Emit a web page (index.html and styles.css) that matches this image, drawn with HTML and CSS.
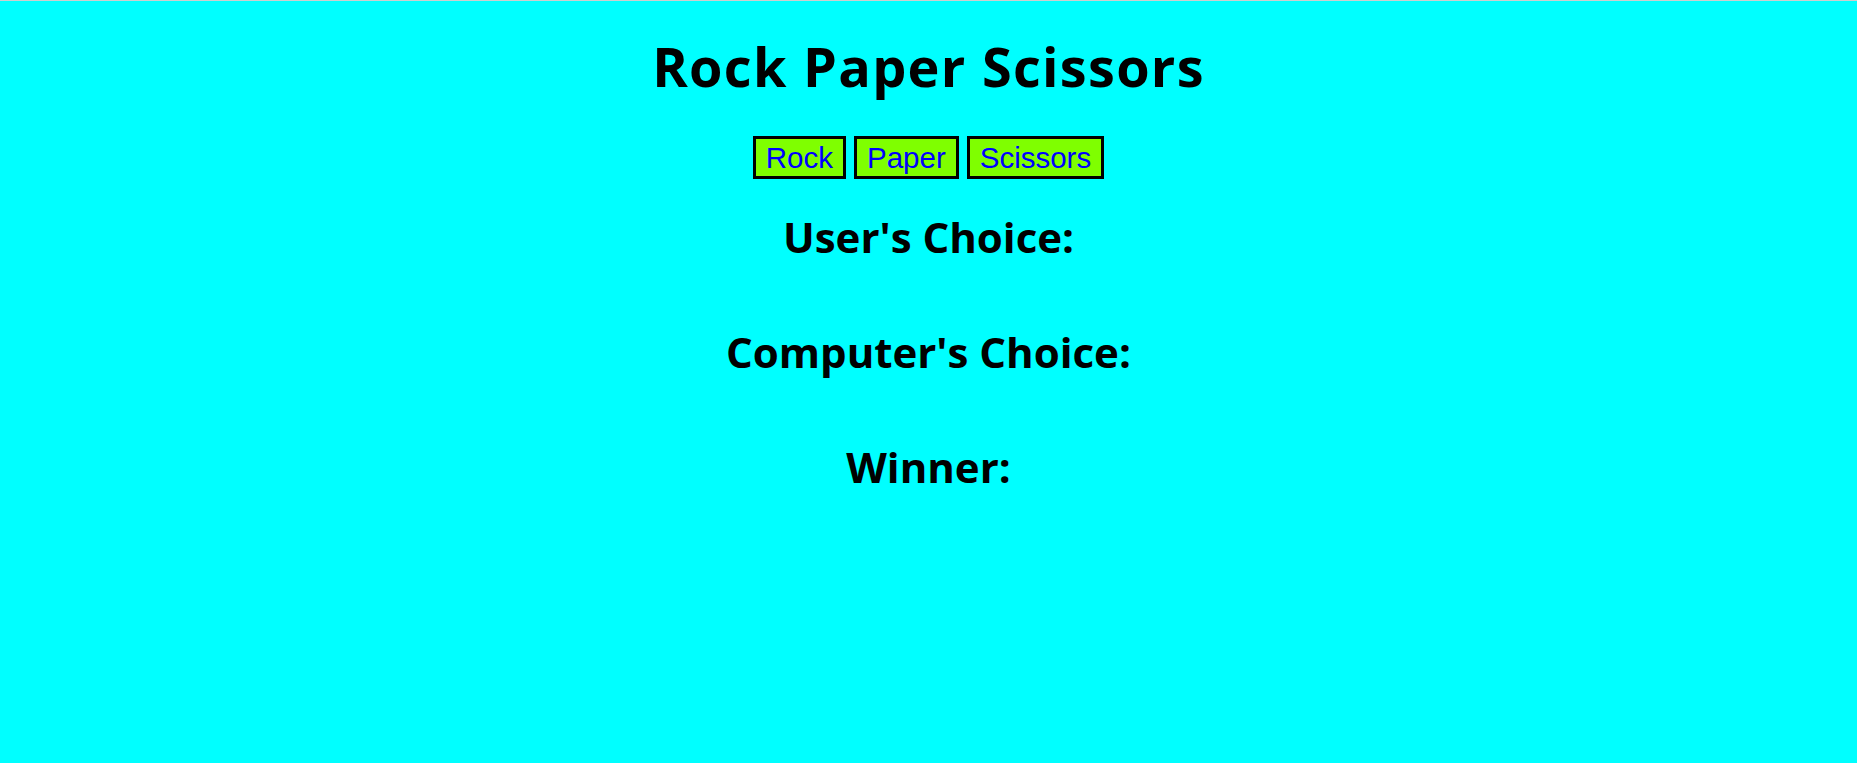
FILE: index.html
```html
<!DOCTYPE html>
<html lang="en">
<head>
<meta charset="utf-8">
<title>Rock Paper Scissors</title>
<link rel="stylesheet" href="styles.css">
</head>
<body>
<main class="game">
  <h1 class="title">Rock Paper Scissors</h1>
  <div class="controls">
    <button class="choice-btn">Rock</button>
    <button class="choice-btn">Paper</button>
    <button class="choice-btn">Scissors</button>
  </div>
  <section class="results">
    <h2 class="result">User's Choice:</h2>
    <h2 class="result">Computer's Choice:</h2>
    <h2 class="result">Winner:</h2>
  </section>
</main>
</body>
</html>
```
FILE: styles.css
```css
html {
  border-top: 1px solid #cfcfcf;
  background: #00ffff;
}
body {
  margin: 0;
  background: #00ffff;
  font-family: "Open Sans", "Noto Sans", sans-serif;
  color: #000;
}
.game {
  display: flex;
  flex-direction: column;
  align-items: center;
  padding-top: 28px;
}
.title {
  margin: 0;
  font-size: 54px;
  line-height: 75px;
  font-weight: 700;
  letter-spacing: 1.3px;
}
.controls {
  display: flex;
  gap: 8px;
  margin-top: 32px;
}
.choice-btn {
  font-family: "Liberation Sans", Arial, sans-serif;
  font-size: 29.5px;
  line-height: 33px;
  padding: 2px 10px;
  border: 3px solid #000;
  background: #7fff00;
  color: #0000ff;
  margin: 0;
  border-radius: 0;
}
.results {
  display: flex;
  flex-direction: column;
  align-items: center;
  gap: 58px;
  margin-top: 29px;
}
.result {
  margin: 0;
  font-size: 42px;
  line-height: 57px;
  font-weight: 700;
}
```
